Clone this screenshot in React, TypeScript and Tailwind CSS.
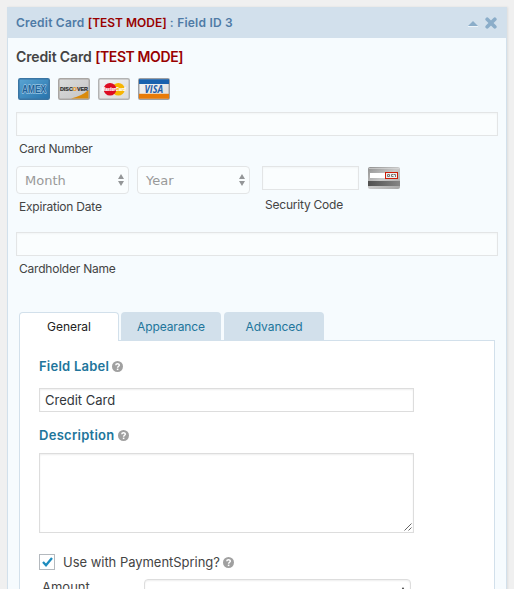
import type { ReactNode } from 'react';

function CardFrame({ id, from, to, stroke, children }: { id: string; from: string; to: string; stroke: string; children: ReactNode }) {
  return (
    <svg width="32" height="22" viewBox="0 0 32 22" className="block shrink-0">
      <defs>
        <linearGradient id={id} x1="0" y1="0" x2="1" y2="1">
          <stop offset="0" stopColor={from} />
          <stop offset="1" stopColor={to} />
        </linearGradient>
      </defs>
      <rect x=".75" y=".75" width="30.5" height="20.5" rx="1.5" fill={`url(#${id})`} stroke={stroke} strokeWidth="1.5" />
      {children}
    </svg>
  );
}

function Amex() {
  return (
    <CardFrame id="amex" from="#5aa5d4" to="#2672ab" stroke="#3a75a3">
      <text x="4" y="14.8" textLength="24" lengthAdjust="spacingAndGlyphs" fontFamily="Liberation Sans, sans-serif" fontWeight="700" fontSize="10" fill="#1f6198" stroke="#9cc7e4" strokeWidth="1.3" strokeLinejoin="round" paintOrder="stroke">AMEX</text>
    </CardFrame>
  );
}

function Discover() {
  return (
    <CardFrame id="disc" from="#dcdcdc" to="#c4c4c4" stroke="#a9a6a3">
      <path d="M13 20.5 Q24 18 30.5 12 V20.5 Z" fill="#d98a0b" />
      <text x="2" y="13.2" textLength="28" lengthAdjust="spacingAndGlyphs" fontFamily="Liberation Sans, sans-serif" fontWeight="700" fontSize="5.6" fill="#2c2c2c" stroke="#2c2c2c" strokeWidth=".2">
        DISC<tspan fill="#e8951a" stroke="#e8951a">O</tspan>VER
      </text>
    </CardFrame>
  );
}

function MasterCard() {
  return (
    <CardFrame id="mc" from="#f4f4f4" to="#dadada" stroke="#b3b3b3">
      <circle cx="20.4" cy="11.3" r="6.3" fill="#f7b500" />
      <circle cx="12" cy="11.3" r="6.3" fill="#dd0c23" />
      <text x="3.5" y="13.2" textLength="24" lengthAdjust="spacingAndGlyphs" fontFamily="Liberation Sans, sans-serif" fontStyle="italic" fontWeight="700" fontSize="5" fill="#fff" stroke="#fff" strokeWidth=".2">MasterCard</text>
    </CardFrame>
  );
}

function Visa() {
  return (
    <CardFrame id="visa" from="#f5f5f5" to="#dedede" stroke="#9d9fa3">
      <rect x="1" y="1.2" width="30" height="4.8" fill="#1861ae" />
      <rect x="1" y="15.8" width="30" height="4.9" fill="#e87b08" />
      <text x="6.5" y="14.7" textLength="18.5" lengthAdjust="spacingAndGlyphs" fontFamily="Open Sans, sans-serif" fontStyle="italic" fontWeight="700" fontSize="10.4" fill="#1e5da8">VISA</text>
    </CardFrame>
  );
}

function SecurityCard() {
  return (
    <svg width="32" height="22" viewBox="0 0 32 22" className="ml-[9px] mt-px block shrink-0">
      <defs>
        <linearGradient id="sec" x1="0" y1="0" x2="1" y2="1">
          <stop offset="0" stopColor="#8f8f8f" />
          <stop offset=".5" stopColor="#c9c9c9" />
          <stop offset="1" stopColor="#a5a5a5" />
        </linearGradient>
        <linearGradient id="strip" x1="0" y1="0" x2="1" y2="0">
          <stop offset="0" stopColor="#505050" />
          <stop offset="1" stopColor="#858585" />
        </linearGradient>
      </defs>
      <rect width="32" height="22" rx="2" fill="url(#sec)" />
      <rect x="1" y="1" width="30" height="1" fill="#ddd" opacity=".6" />
      <rect y="14" width="32" height="5" fill="url(#strip)" />
      <rect x="2" y="6" width="15" height="5" fill="#fff" />
      <rect x="17.5" y="5.5" width="12" height="6" fill="#eee" stroke="#cc1b05" />
      <path d="M19.5 7.5h2v2h-2zM25.5 7.5h-2v2h2M26 7.5h1.5v2.5" fill="none" stroke="#777" />
    </svg>
  );
}

function Help() {
  return (
    <svg width="11" height="11" viewBox="0 0 11 11" className="ml-[3px] block shrink-0">
      <circle cx="5.5" cy="5.5" r="5.5" fill="#a0a0a0" />
      <path d="M3.8 4.2C3.8 2.2 7.3 2.2 7.3 4.2C7.3 5.3 5.6 5.3 5.6 6.8" fill="none" stroke="#fff" strokeWidth="1.5" />
      <rect x="4.8" y="7.6" width="1.6" height="1.5" fill="#fff" />
    </svg>
  );
}

function Select({ label }: { label: string }) {
  return (
    <div className="flex h-[28px] w-[113px] items-center justify-between rounded-[4px] border border-[#e3e5e6] bg-[#fafdfe] pl-2 pr-[4px]">
      <span className="pt-px font-['DejaVu_Sans',sans-serif] text-[13px] leading-4 text-[#999]">{label}</span>
      <svg width="6" height="12" viewBox="0 0 6 12" className="block">
        <path d="M0 5 3 0 6 5zM0 7h6L3 12z" fill="#949698" />
      </svg>
    </div>
  );
}

const input = 'border border-[#e3e5e6] bg-[#fafdfe] shadow-[inset_0_1px_2px_rgba(0,0,0,0.035)]';
const caption = 'block h-4 whitespace-nowrap text-[12px] leading-4 tracking-[-0.22px] text-[#444]';

export default function App() {
  return (
    <div className="h-[589px] w-[514px] overflow-hidden bg-[#f0f0f0] pl-[7px] pt-[7px] font-['Inter',sans-serif]">
      <div className="h-[620px] w-[500px] border border-[#d2e0eb] bg-[#f6fbfe] shadow-[1px_0_2px_rgba(0,0,0,0.08)]">
        <div className="flex h-[30px] items-center bg-[#d2e0ec] pl-2 pr-[9px]">
          <span className="whitespace-nowrap text-[12px] font-semibold leading-4 tracking-[0.22px] text-[#4f7ba6]">
            Credit Card <span className="tracking-[-0.02px] text-[#990000]">[TEST MODE]</span> : Field ID 3
          </span>
          <svg width="10" height="6" viewBox="0 0 10 6" className="ml-auto mr-[7px] mt-px block">
            <path d="M0 5 5 0 10 5z" fill="#8badc9" />
            <path d="M0 5.5h10" stroke="#edf4f9" />
          </svg>
          <svg width="12" height="12" viewBox="0 0 12 12" className="block">
            <path d="M2.2 2.2 9.8 9.8M9.8 2.2 2.2 9.8" stroke="#8badc9" strokeWidth="3.7" strokeLinecap="round" />
          </svg>
        </div>
        <div className="px-2 pt-[11px]">
          <h2 className="h-4 whitespace-nowrap text-[14px] font-semibold leading-4 tracking-[-0.12px] text-[#444]">
            Credit Card <span className="tracking-[-0.4px] text-[#990000]">[TEST MODE]</span>
          </h2>
          <div className="mt-[13px] flex gap-2 pl-[2px]">
            <Amex />
            <Discover />
            <MasterCard />
            <Visa />
          </div>
          <div className={`mt-[12px] h-[24px] ${input}`} />
          <label className={`mt-[5px] pl-[3px] ${caption}`}>Card Number</label>
          <div className="mt-[9px] flex h-[66px] items-start">
            <div>
              <div className="flex gap-2">
                <Select label="Month" />
                <Select label="Year" />
              </div>
              <label className={`mt-[5px] pl-[3px] ${caption}`}>Expiration Date</label>
            </div>
            <div className="ml-[12px]">
              <div className={`h-[24px] w-[97px] ${input}`} />
              <label className={`mt-[7px] pl-[3px] ${caption}`}>Security Code</label>
            </div>
            <SecurityCard />
          </div>
          <div className={`h-[24px] ${input}`} />
          <label className={`mt-[5px] pl-[3px] ${caption}`}>Cardholder Name</label>
        </div>
        <div className="ml-[11px] mt-[35px] w-[476px]">
          <div className="flex text-[12px] leading-4">
            <div className="relative z-10 -mb-px h-[29px] w-[100px] rounded-t-[4px] border border-b-0 border-[#d2e0eb] bg-white pt-[6px] text-center tracking-[-0.05px] text-[#222]">General</div>
            <div className="ml-[2px] h-[28px] w-[100px] rounded-t-[4px] bg-[#d2e0eb] pt-[7px] text-center tracking-[-0.1px] text-[#21759b]">Appearance</div>
            <div className="ml-[3px] h-[28px] w-[100px] rounded-t-[4px] bg-[#d2e0eb] pt-[7px] text-center tracking-[-0.05px] text-[#21759b]">Advanced</div>
          </div>
          <div className="h-[280px] border border-[#d2e0eb] bg-white pl-[19px] pt-[17px]">
            <div className="flex h-4 items-center text-[13px] font-semibold tracking-[0.23px] text-[#21759b]"><span className="pt-[2px]">Field Label</span><Help /></div>
            <div className="mt-[14px] flex h-[24px] w-[375px] items-center border border-[#ddd] bg-white pl-[5px] pt-[2px] text-[13px] text-[#32373c] shadow-[inset_0_1px_2px_rgba(0,0,0,0.07)]">Credit Card</div>
            <div className="mt-[15px] flex h-4 items-center text-[13px] font-semibold tracking-[0.28px] text-[#21759b]"><span className="pt-[2px]">Description</span><Help /></div>
            <div className="mt-[10px] flex h-[80px] w-[375px] items-end justify-end border border-[#ddd] bg-white p-[1px] shadow-[inset_0_1px_2px_rgba(0,0,0,0.07)]">
              <svg width="8" height="8" viewBox="0 0 8 8" className="block">
                <path d="M.5 7.5 7.5 .5M4.5 7.5 7.5 4.5" stroke="#555" strokeWidth=".9" fill="none" />
              </svg>
            </div>
            <div className="mt-[21px] flex h-4 items-center text-[13px] text-[#444]">
              <div className="flex h-4 w-4 items-center justify-center border border-[#b4b9be] bg-white">
                <svg width="11" height="10" viewBox="0 0 11 10" className="block">
                  <path d="M1 5 4 8.2 10 1" fill="none" stroke="#1e8cbe" strokeWidth="2.3" />
                </svg>
              </div>
              <span className="ml-[8px] whitespace-nowrap pt-[2px] tracking-[-0.03px]">Use with PaymentSpring?</span>
              <Help />
            </div>
            <div className="mt-[9px] flex h-[28px] text-[13px] leading-4 text-[#444]">
              <span className="ml-[3px] w-[102px]">Amount</span>
              <div className="flex h-[28px] w-[267px] items-center justify-end rounded-[4px] border border-[#ddd] bg-white pr-[4px] shadow-[inset_0_1px_2px_rgba(0,0,0,0.07)]">
                <svg width="6" height="12" viewBox="0 0 6 12" className="block">
                  <path d="M0 5 3 0 6 5zM0 7h6L3 12z" fill="#444" />
                </svg>
              </div>
            </div>
          </div>
        </div>
      </div>
    </div>
  );
}
